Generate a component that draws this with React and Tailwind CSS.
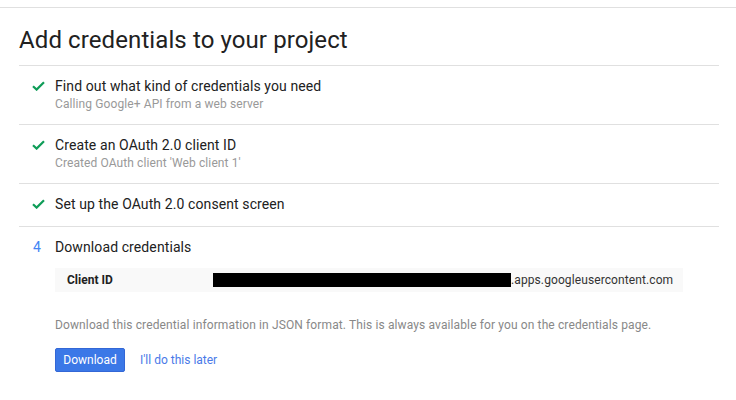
const STEPS = [
  { title: "Find out what kind of credentials you need", sub: "Calling Google+ API from a web server" },
  { title: "Create an OAuth 2.0 client ID", sub: "Created OAuth client 'Web client 1'" },
  { title: "Set up the OAuth 2.0 consent screen" },
];

function Check() {
  return (
    <svg width="13" height="10" viewBox="0 0 13 10" className="mt-[5px]">
      <path d="M1 5.2 L4.6 8.6 L12 1.2" fill="none" stroke="#0f9d58" strokeWidth="2.2" />
    </svg>
  );
}

export default function App() {
  return (
    <div className="w-[736px] h-[400px] bg-white text-[#212121]" style={{ fontFamily: "Roboto, 'Liberation Sans', sans-serif" }}>
      <div className="pt-[7px]">
        <div className="border-t border-[#e0e0e0]" />
      </div>
      <div className="ml-[19px] w-[700px]">
        <h1 className="pt-[16px] pb-[9px] text-[24px] leading-[32px] font-normal tracking-[0.1px]">Add credentials to your project</h1>

        {STEPS.map((s) => (
          <div key={s.title} className="flex border-t border-[#e0e0e0] pt-[10px] pb-[12px]">
            <div className="w-[36px] pl-[13px] shrink-0">
              <Check />
            </div>
            <div>
              <div className="text-[14px] leading-[20px] tracking-[0.1px]">{s.title}</div>
              {s.sub && <div className="text-[12px] leading-[16px] text-[#999] tracking-[0.1px]">{s.sub}</div>}
            </div>
          </div>
        ))}

        <div className="flex border-t border-[#e0e0e0] pt-[10px]">
          <div className="w-[36px] pl-[14px] shrink-0 text-[14px] leading-[20px] text-[#4285f4]">4</div>
          <div className="flex-1">
            <div className="text-[14px] leading-[20px] tracking-[0.1px]">Download credentials</div>
            <div className="mt-[11px] w-[628px] h-[24px] bg-[#f9f9f9] flex items-center">
              <div className="w-[158px] pl-[12px] text-[12px] font-bold text-[#212121]">Client ID</div>
              <div className="w-[298px] h-[14px] bg-black" />
              <div className="text-[12px] text-[#333] tracking-[0.1px]">.apps.googleusercontent.com</div>
            </div>
            <p className="mt-[25px] text-[12px] leading-[16px] text-[#888] tracking-[0.12px]">
              Download this credential information in JSON format. This is always available for you on the credentials page.
            </p>
            <div className="mt-[15px] flex items-center gap-[15px]">
              <button className="w-[70px] h-[24px] rounded-[2px] bg-[#3b78e7] border border-[#3367d6] text-white text-[12px]">
                Download
              </button>
              <a className="text-[12px] text-[#4a7ae8]">I'll do this later</a>
            </div>
          </div>
        </div>
      </div>
    </div>
  );
}
